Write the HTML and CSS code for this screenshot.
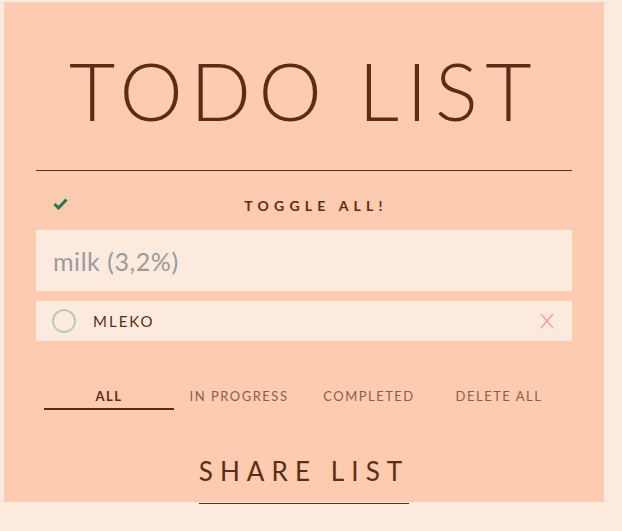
FILE: index.html
```html
<!DOCTYPE html>
<html lang="en">
<head>
<meta charset="utf-8">
<title>Todo List</title>
<link rel="stylesheet" href="styles.css">
</head>
<body>
<main class="card">
  <h1 class="title">TODO LIST</h1>
  <hr class="rule">
  <div class="toggle-row">
    <svg class="check" width="15" height="12" viewBox="0 0 15 12" aria-hidden="true">
      <path d="M1.5 6 L5.5 10 L13.5 1.5" fill="none" stroke="#1f7a50" stroke-width="3"/>
    </svg>
    <span class="toggle-label">TOGGLE ALL!</span>
  </div>
  <input class="new-todo" type="text" placeholder="milk (3,2%)">
  <ul class="todos">
    <li class="todo">
      <span class="circle"></span>
      <span class="todo-text">MLEKO</span>
      <svg class="remove" width="14" height="16" viewBox="0 0 14 16" aria-hidden="true">
        <path d="M1 1 L13 15 M13 1 L1 15" stroke="#f4a0a0" stroke-width="1.4" fill="none"/>
      </svg>
    </li>
  </ul>
  <nav class="filters">
    <a class="filter active">ALL</a>
    <a class="filter">IN PROGRESS</a>
    <a class="filter">COMPLETED</a>
    <a class="filter">DELETE ALL</a>
  </nav>
  <div class="share-wrap">
    <a class="share">SHARE LIST</a>
  </div>
</main>
</body>
</html>
```
FILE: styles.css
```css
html, body {
  margin: 0;
  padding: 0;
  background: #fdeadf;
}
body {
  padding: 2px 4px;
  font-family: Lato, "Open Sans", sans-serif;
  color: #5c2d14;
}
.card {
  width: 600px;
  box-sizing: border-box;
  background: #fccbb0;
  padding: 40px 32px 0;
  display: flex;
  flex-direction: column;
}
.title {
  margin: 0;
  font-weight: 300;
  font-size: 80px;
  line-height: 96px;
  letter-spacing: 7.5px;
  text-align: center;
  color: #5c2d14;
}
.rule {
  margin: 32px 0 0;
  border: 0;
  border-top: 1px solid #5c2d14;
  height: 0;
}
.toggle-row {
  display: flex;
  align-items: center;
  height: 59px;
  box-sizing: border-box;
  padding: 10px 8px 0 17px;
}
.check { display: block; margin-top: -4px; }
.toggle-label {
  flex: 1;
  text-align: center;
  font-weight: 700;
  font-size: 14px;
  letter-spacing: 5.2px;
  color: #5c2d14;
}
.new-todo {
  display: block;
  margin: 0;
  height: 61px;
  box-sizing: border-box;
  border: 0;
  outline: 0;
  background: #fdeadf;
  padding: 0 16px 0 17px;
  font-family: Lato, sans-serif;
  font-size: 25px;
  letter-spacing: 0.55px;
  color: #5c2d14;
}
.new-todo::placeholder { color: #9b9b9b; }
.todos {
  list-style: none;
  margin: 10px 0 0;
  padding: 0;
}
.todo {
  display: flex;
  align-items: center;
  height: 40px;
  background: #fdeadf;
  padding: 0 18px 0 16px;
}
.circle {
  width: 20px;
  height: 20px;
  border: 2px solid #b8cdb6;
  border-radius: 50%;
}
.todo-text {
  flex: 1;
  margin-left: 17px;
  font-size: 15px;
  letter-spacing: 2px;
  color: #5c2d14;
}
.remove { display: block; }
.filters {
  display: grid;
  grid-template-columns: repeat(4, 130px);
  margin: 47px 8px 0;
}
.filter {
  text-align: center;
  font-size: 13px;
  line-height: 16px;
  letter-spacing: 1.5px;
  color: #8c5e4a;
  padding-bottom: 4px;
  border-bottom: 2px solid transparent;
}
.filter.active {
  font-weight: 700;
  color: #5c2d14;
  border-bottom-color: #5c2d14;
}
.share-wrap {
  display: flex;
  justify-content: center;
  margin: 46px 0 -2px;
}
.share {
  font-size: 26px;
  line-height: 31px;
  letter-spacing: 7.1px;
  color: #5c2d14;
  padding-bottom: 16px;
  border-bottom: 1px solid #5c2d14;
}
```
